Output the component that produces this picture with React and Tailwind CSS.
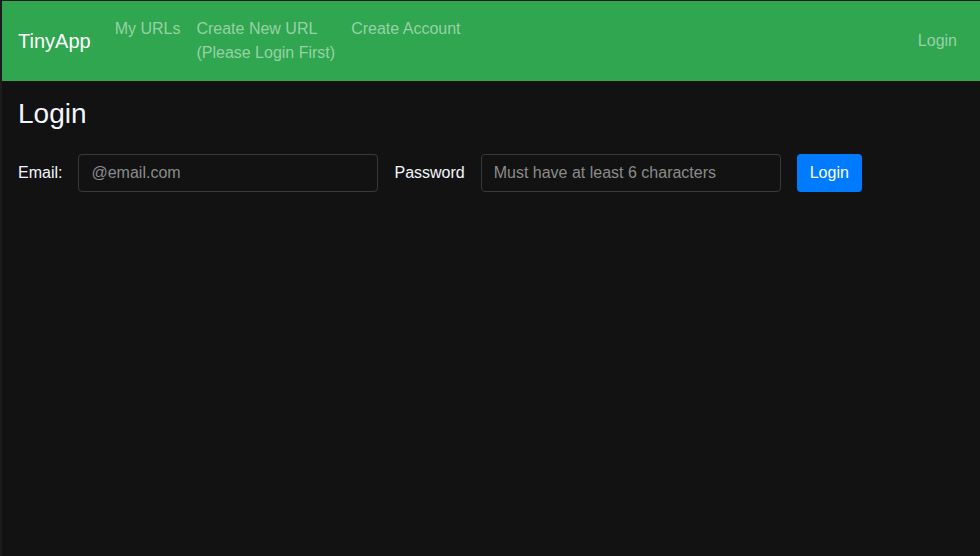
export default function App() {
  return (
    <div
      className="min-h-[556px] w-full bg-[#121212] border-t border-l-2 border-[#1c1c1c] text-white"
      style={{ fontFamily: '"Liberation Sans", Arial, sans-serif' }}
    >
      <nav className="flex items-center justify-between bg-[#2fa64f] h-[80px] pl-4 pr-[15px]">
        <div className="flex items-center">
          <span className="text-[20px] leading-[30px] mr-4 text-white">TinyApp</span>
          <ul className="flex items-start text-[16px] leading-6 text-[#97d2a7] pt-0 self-start">
            <li className="p-2">My URLs</li>
            <li className="p-2">
              Create New URL
              <br />
              (Please Login First)
            </li>
            <li className="p-2">Create Account</li>
          </ul>
        </div>
        <ul className="flex text-[16px] leading-6 text-[#97d2a7]">
          <li className="p-2">Login</li>
        </ul>
      </nav>
      <main className="px-4 pt-[16px]">
        <h3 className="text-[28px] leading-[34px] text-[#f2f7ff] mb-[23px]">Login</h3>
        <form className="flex items-center text-[16px]" onSubmit={(e) => e.preventDefault()}>
          <label className="mr-[16px] text-[#f2f7ff]">Email:</label>
          <input
            className="w-[300px] h-[38px] rounded-[4px] border border-[#393939] bg-[#121212] px-3 text-[16px] text-white placeholder-[#8b8b8b] outline-none"
            placeholder="@email.com"
          />
          <label className="ml-[16px] mr-[16px] text-[#f2f7ff]">Password</label>
          <input
            className="w-[300px] h-[38px] rounded-[4px] border border-[#393939] bg-[#121212] px-3 text-[16px] text-white placeholder-[#8b8b8b] outline-none"
            placeholder="Must have at least 6 characters"
          />
          <button className="ml-[16px] h-[38px] px-[13px] rounded-[4px] bg-[#007bff] text-white text-[16px]">
            Login
          </button>
        </form>
      </main>
    </div>
  );
}
